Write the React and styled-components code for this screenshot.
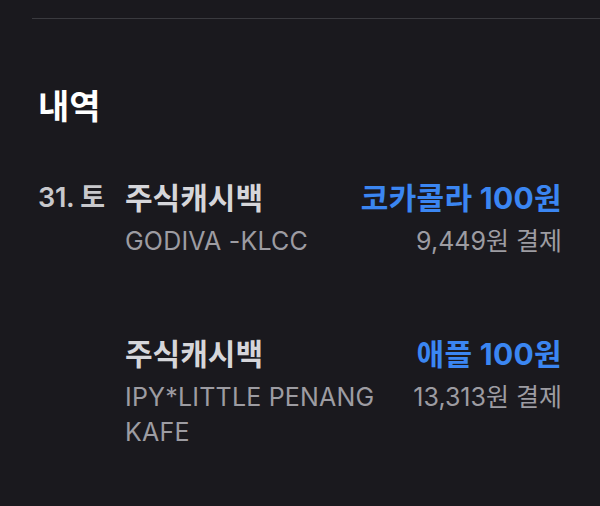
import styled, { createGlobalStyle } from 'styled-components'

const GlobalStyle = createGlobalStyle`
  html, body {
    margin: 0;
    padding: 0;
    background: #1a191e;
  }
  body {
    font-family: "Inter", "Noto Sans CJK KR", sans-serif;
    -webkit-font-smoothing: antialiased;
  }
`

const items = [
  {
    date: '31. 토',
    title: '주식캐시백',
    place: 'GODIVA -KLCC',
    reward: '코카콜라 100원',
    paid: '9,449원 결제',
  },
  {
    date: '',
    title: '주식캐시백',
    place: 'IPY*LITTLE PENANG KAFE',
    reward: '애플 100원',
    paid: '13,313원 결제',
  },
]

export default function App() {
  return (
    <Page>
      <GlobalStyle />
      <Divider />
      <Section>
        <Heading>내역</Heading>
        <List>
          {items.map((it, i) => (
            <Row key={i}>
              <DateCell>{it.date}</DateCell>
              <Main>
                <Title>{it.title}</Title>
                <Place>{it.place}</Place>
              </Main>
              <Side>
                <Reward>{it.reward}</Reward>
                <Paid>{it.paid}</Paid>
              </Side>
            </Row>
          ))}
        </List>
      </Section>
    </Page>
  )
}

const Page = styled.div`
  width: 600px;
  height: 506px;
  background: #1a191e;
  overflow: hidden;
  padding-top: 18px;
  box-sizing: border-box;
`

const Divider = styled.div`
  height: 1px;
  margin-left: 32px;
  background: #3a3a3f;
`

const Section = styled.section`
  padding: 66px 38px 0 38px;
`

const Heading = styled.h2`
  margin: 0;
  color: #ffffff;
  font-family: "Noto Sans CJK KR", sans-serif;
  font-size: 34px;
  font-weight: 700;
  line-height: 40px;
`

const List = styled.div`
  margin-top: 55px;
  display: flex;
  flex-direction: column;
  gap: 77px;
`

const Row = styled.div`
  display: grid;
  grid-template-columns: 87px 1fr auto;
  align-items: start;
`

const DateCell = styled.div`
  color: #c8c8cc;
  font-size: 27px;
  font-weight: 600;
  line-height: 36px;
  letter-spacing: -0.3px;
`

const Main = styled.div`
  display: flex;
  flex-direction: column;
  gap: 8px;
`

const Title = styled.div`
  color: #d6d6da;
  font-size: 30px;
  font-weight: 700;
  line-height: 36px;
`

const Place = styled.div`
  color: #9d9ca2;
  font-size: 25px;
  line-height: 35px;
  letter-spacing: 0.2px;
  max-width: 260px;
`

const Side = styled.div`
  display: flex;
  flex-direction: column;
  align-items: flex-end;
  gap: 8px;
`

const Reward = styled.div`
  color: #3b86f2;
  font-size: 30px;
  font-weight: 700;
  line-height: 36px;
  letter-spacing: 0.3px;
`

const Paid = styled.div`
  color: #9d9ca2;
  font-size: 25px;
  line-height: 35px;
`
